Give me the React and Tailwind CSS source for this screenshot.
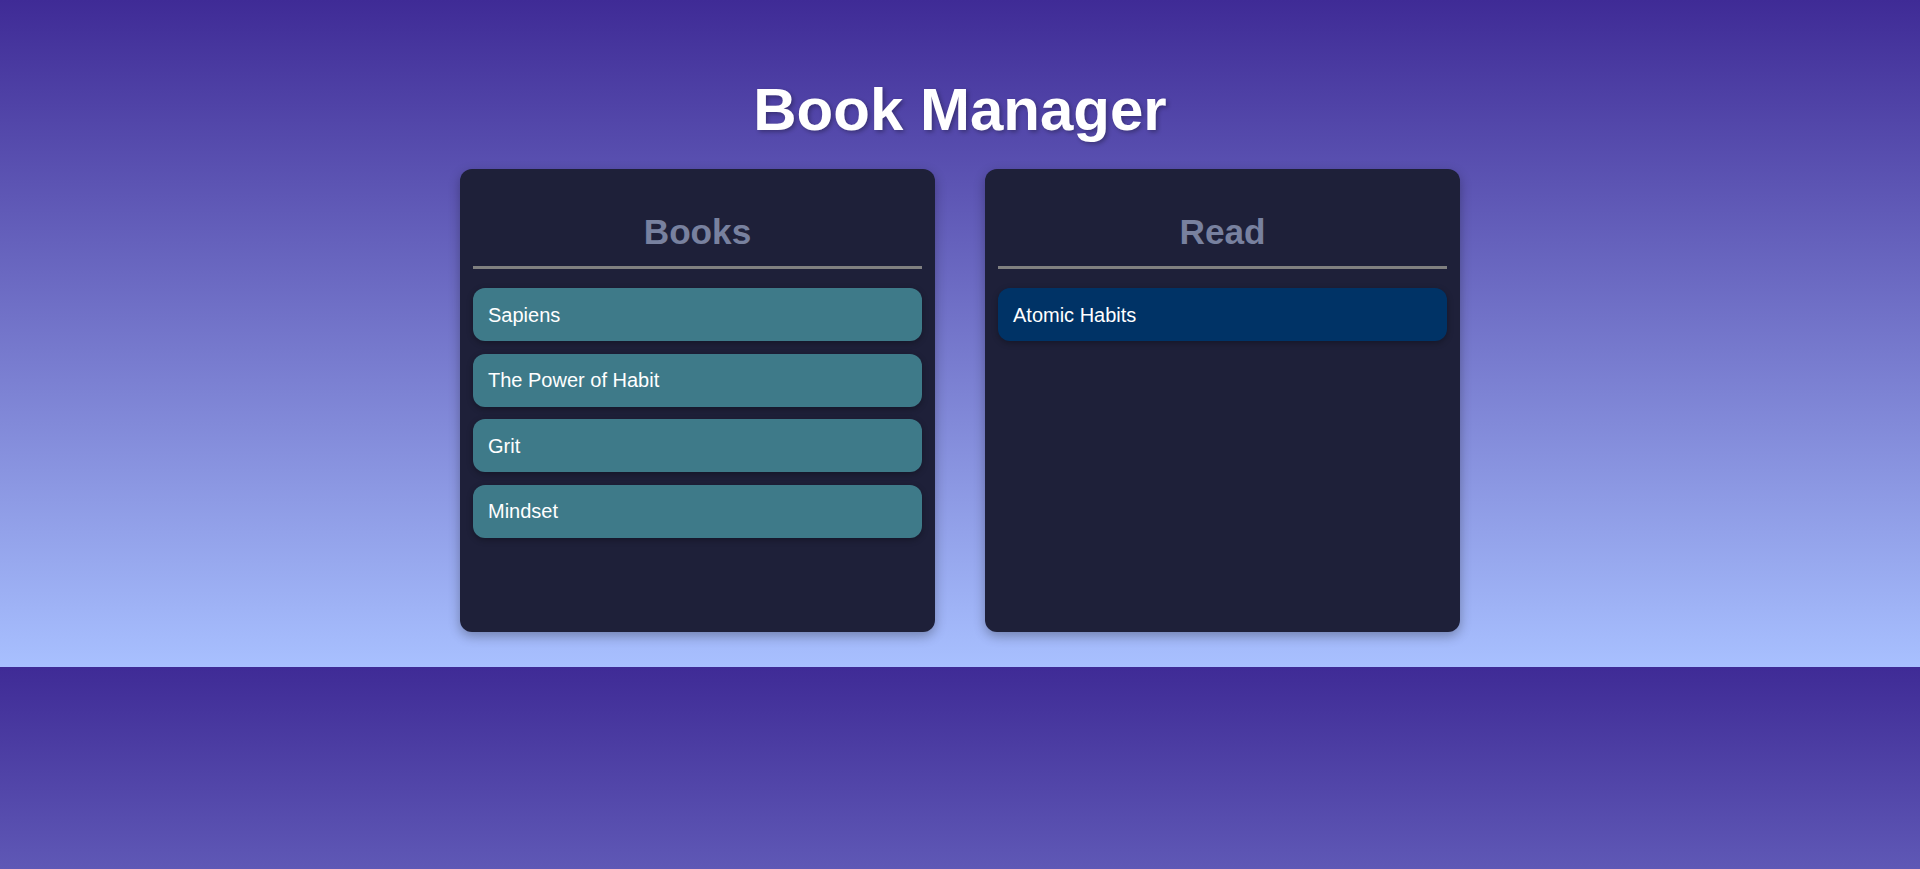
import React from "react";

const books = ["Sapiens", "The Power of Habit", "Grit", "Mindset"];
const read = ["Atomic Habits"];

function Column({ title, items, itemClass }) {
  return (
    <div className="w-[475px] h-[463px] rounded-[12px] bg-[#1e2039] px-[13px] pt-[43px] shadow-[0_4px_12px_rgba(0,0,0,0.3)]">
      <h2 className="text-center text-[35.2px] leading-[39px] font-bold text-[#78819f] pb-[15px] border-b-[3px] border-[#808080]">
        {title}
      </h2>
      <div className="mt-[19px] flex flex-col gap-[12.6px]">
        {items.map((b) => (
          <div
            key={b}
            className={`h-[53px] flex items-center px-[15px] rounded-[12px] text-white text-[20px] shadow-[0_2px_6px_rgba(0,0,0,0.3)] ${itemClass}`}
          >
            {b}
          </div>
        ))}
      </div>
    </div>
  );
}

export default function App() {
  return (
    <div className="w-full h-[869px] font-['Liberation_Sans',Arial,sans-serif] overflow-hidden">
      <div className="h-[667px] bg-[linear-gradient(#3f2b96,#a8c0ff)] flex flex-col items-center pt-[76px]">
        <h1 className="text-[60px] leading-[67px] font-bold text-white [text-shadow:2px_2px_4px_rgba(0,0,0,0.3)]">
          Book Manager
        </h1>
        <div className="mt-[26px] flex gap-[50px]">
          <Column title="Books" items={books} itemClass="bg-[#3e7a89]" />
          <Column title="Read" items={read} itemClass="bg-[#003366]" />
        </div>
      </div>
      <div className="h-[202px] bg-[linear-gradient(#3f2b96_0px,#a8c0ff_667px)]" />
    </div>
  );
}
